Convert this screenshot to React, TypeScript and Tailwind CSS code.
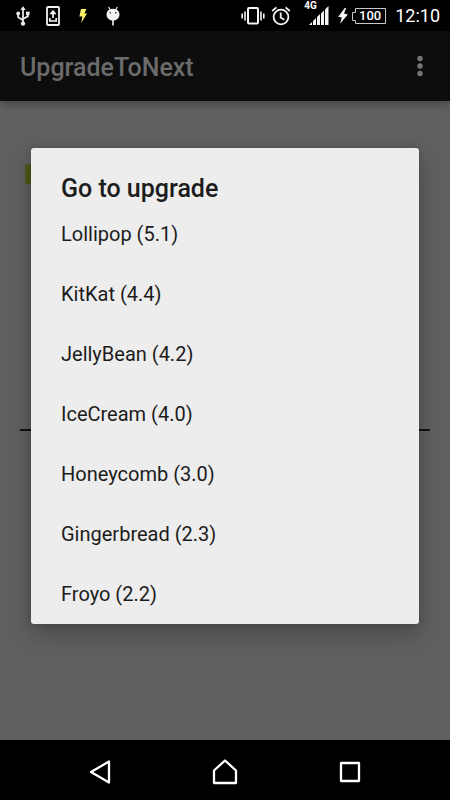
import React from "react";

const versions: string[] = [
  "Lollipop (5.1)",
  "KitKat (4.4)",
  "JellyBean (4.2)",
  "IceCream (4.0)",
  "Honeycomb (3.0)",
  "Gingerbread (2.3)",
  "Froyo (2.2)",
];

function UsbIcon() {
  return (
    <svg width="14" height="20" viewBox="0 0 14 20" fill="none" stroke="#e8e8e8" strokeWidth="1.8">
      <path d="M7 3v14M2.2 8v3.2L7 14.2M11.8 7v3.4L7 13" />
      <path d="M7 0l2.600 4H4.400z" fill="#e8e8e8" stroke="none" />
      <circle cx="7" cy="17.600" r="2.200" fill="#e8e8e8" stroke="none" />
      <circle cx="2.200" cy="7.400" r="1.900" fill="#e8e8e8" stroke="none" />
      <path d="M10 5.600h3.600v3.600H10z" fill="#e8e8e8" stroke="none" />
    </svg>
  );
}

function UpdateIcon() {
  return (
    <svg width="14" height="20" viewBox="0 0 14 20" fill="none" stroke="#f2f2f2">
      <rect x="1" y="1" width="12" height="18" rx="1" strokeWidth="1.800" />
      <path d="M7 12V6M3.800 12v3h6.400v-3" strokeWidth="1.700" />
      <path d="M7 3.800l3.600 4.400H3.400z" fill="#f2f2f2" stroke="none" />
    </svg>
  );
}

function YellowBoltIcon() {
  return (
    <svg width="8" height="14" viewBox="0 0 8 14">
      <path d="M2 0h5.400L5.400 4.600H8L2.200 14l1.200-6.600H.4z" fill="#fdf267" />
    </svg>
  );
}

function DroidIcon() {
  return (
    <svg width="14" height="20" viewBox="0 0 14 20" fill="#f4f4f4">
      <path d="M2.500 1l2 3M11.500 1l-2 3" stroke="#f4f4f4" strokeWidth="1.200" />
      <path d="M1 6Q3 2.800 7 2.800T13 6Q14.200 9.500 12.400 12 10.400 14.800 7 14.800T1.600 12Q-.2 9.500 1 6z" />
      <path d="M6.200 14h1.600v5.500H6.200z" />
      <circle cx="4.200" cy="6.800" r="0.700" fill="#000" />
      <circle cx="9.800" cy="6.800" r="0.700" fill="#000" />
    </svg>
  );
}

function VibrateIcon() {
  return (
    <svg width="24" height="18" viewBox="0 0 24 18" fill="none" stroke="#f4f4f4" strokeWidth="1.600">
      <rect x="7" y="1" width="10" height="15.600" rx="1" strokeWidth="2" />
      <path d="M4 4.500v9M20 4.500v9M1.200 6.500v5M22.800 6.500v5" />
    </svg>
  );
}

function AlarmIcon() {
  return (
    <svg width="20" height="20" viewBox="0 0 20 20" fill="none" stroke="#f4f4f4" strokeWidth="1.800">
      <circle cx="10" cy="11" r="7.400" />
      <path d="M9.700 6.500v5l3.600 2.200M1.200 5l4.200-3.600M18.800 5l-4.200-3.600" />
    </svg>
  );
}

function SignalIcon() {
  return (
    <svg width="20" height="20" viewBox="0 0 20 20" fill="#f4f4f4">
      <path d="M0 19l3-3v3zM4 15l3-3v7H4zM8 11l3-3v11H8zM12 7.500l3-3V19h-3zM16 3.500l3.500-3.500v19H16z" />
    </svg>
  );
}

function BoltIcon() {
  return (
    <svg width="10" height="16" viewBox="0 0 10 16">
      <path d="M6.800 0L.2 8.800l3.600.6L2 15.800l7.900-9.400-3.900-.8 2.200-5.600z" fill="#f6f6f6" />
    </svg>
  );
}

function Battery() {
  return (
    <span className="relative flex h-4 w-[34px] items-center justify-center">
      <svg className="absolute inset-0" width="34" height="16" viewBox="0 0 34 16" fill="none" stroke="#c8c8c8" strokeWidth="1">
        <path d="M3.500.5h30v15h-30v-3h-3v-8h3z" />
      </svg>
      <span className="pl-[2px] text-[13px] font-medium leading-4 text-white">100</span>
    </span>
  );
}

function StatusBar() {
  return (
    <div className="flex h-[31px] items-center justify-between bg-black pl-4 pr-[10px]">
      <div className="flex items-center">
        <UsbIcon />
        <span className="ml-4 flex"><UpdateIcon /></span>
        <span className="ml-[19px] flex"><YellowBoltIcon /></span>
        <span className="ml-[19px] flex"><DroidIcon /></span>
      </div>
      <div className="flex items-center">
        <VibrateIcon />
        <span className="ml-[6px] flex"><AlarmIcon /></span>
        <span className="relative ml-[18px] flex">
          <SignalIcon />
          <span className="absolute -left-[5px] -top-[5px] text-[10px] font-bold leading-[10px] text-white">4G</span>
        </span>
        <span className="ml-[9px] flex"><BoltIcon /></span>
        <span className="ml-1 flex"><Battery /></span>
        <time className="ml-[9px] text-[18px] leading-5 text-white">12:10</time>
      </div>
    </div>
  );
}

function AppBar() {
  return (
    <header className="relative flex h-[70px] items-center justify-between bg-[#0d0d0d] pl-5 pr-[15px] shadow-[0_3px_8px_rgba(0,0,0,0.3)]">
      <h1 className="pt-1 text-[25px] font-medium leading-8 text-[#6b6b6b]">UpgradeToNext</h1>
      <button type="button" aria-label="More options" className="flex w-[30px] justify-center">
        <svg width="6" height="22" viewBox="0 0 6 22" fill="#757575">
          <circle cx="3" cy="3.500" r="2.700" />
          <circle cx="3" cy="11" r="2.700" />
          <circle cx="3" cy="18.500" r="2.700" />
        </svg>
      </button>
    </header>
  );
}

function UpgradeDialog() {
  return (
    <section
      role="dialog"
      aria-labelledby="dialog-title"
      className="w-full overflow-hidden rounded-[3px] bg-[#ededed] shadow-[0_10px_24px_rgba(0,0,0,0.25),0_0_6px_rgba(0,0,0,0.15)]"
    >
      <h2 id="dialog-title" className="px-[30px] pt-[26px] text-[25px] font-medium leading-[30px] text-[#1c1c1c]">
        Go to upgrade
      </h2>
      <ul>
        {versions.map((version) => (
          <li key={version}>
            <button type="button" className="flex h-[60px] w-full items-center px-[30px] text-left text-[20px] leading-6 text-[#1c1c1c]">
              {version}
            </button>
          </li>
        ))}
      </ul>
    </section>
  );
}

function NavigationBar() {
  return (
    <nav className="flex h-[60px] items-center justify-between bg-black px-[85px] pt-1">
      <button type="button" aria-label="Back" className="flex w-[30px] justify-center">
        <svg width="24" height="26" viewBox="0 0 24 26" fill="none" stroke="#fff" strokeWidth="2.300" strokeLinejoin="round">
          <path d="M3 13L21 2.500v21z" />
        </svg>
      </button>
      <button type="button" aria-label="Home" className="flex w-[30px] justify-center">
        <svg width="26" height="26" viewBox="0 0 26 26" fill="none" stroke="#fff" strokeWidth="2.300" strokeLinejoin="round">
          <path d="M13 1.500L24 11.500V24H2V11.500z" />
        </svg>
      </button>
      <button type="button" aria-label="Recent apps" className="flex w-[30px] justify-center">
        <svg width="22" height="22" viewBox="0 0 22 22" fill="none" stroke="#fff" strokeWidth="2.300" strokeLinejoin="round">
          <path d="M2 2h18v18H2z" />
        </svg>
      </button>
    </nav>
  );
}

export default function App() {
  return (
    <div className="flex min-h-screen flex-col bg-black font-[Roboto,sans-serif]">
      <StatusBar />
      <main className="relative flex flex-1 flex-col bg-[#606060]">
        <AppBar />
        <div className="flex flex-col px-5 pt-[63px]">
          <div className="ml-[5px] h-5 w-20 rounded-[2px] bg-[#4d5a1a]" />
          <div className="mt-[245px] h-[2px] bg-[#111111]" />
        </div>
        <div className="absolute inset-0 flex items-center justify-center px-[31px]">
          <UpgradeDialog />
        </div>
      </main>
      <NavigationBar />
    </div>
  );
}
